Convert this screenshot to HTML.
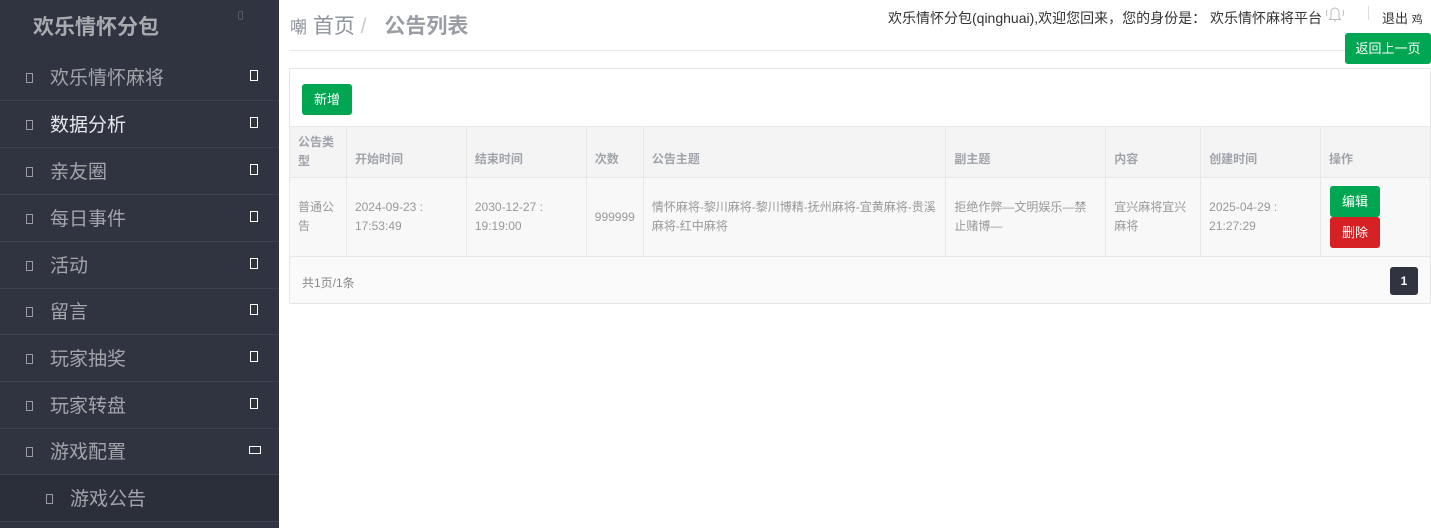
<!DOCTYPE html>
<html><head><meta charset="utf-8"><style>
*{box-sizing:border-box;margin:0;padding:0}
body{width:1431px;height:528px;overflow:hidden;background:#fff;font-family:"Liberation Sans","Noto Sans CJK SC",sans-serif;position:relative}
.side{position:absolute;left:0;top:0;width:279px;height:528px;background:#2f3440}
.logo{position:absolute;left:33px;top:11px;font-size:21px;font-weight:bold;color:#a9aaae}
.logo-ic{position:absolute;left:238px;top:11px;width:5px;height:9px;border:1px solid #555b66;border-radius:2px}
.item{position:absolute;left:0;width:279px;height:47px;border-bottom:1px solid #3d4350;color:#a3a5aa;font-size:19px}
.item .t{position:absolute;left:50px;top:9px}
.item .i{position:absolute;left:26px;top:19px;width:7px;height:10px;border:1px solid #9a9ca2}
.item .r{position:absolute;left:250px;top:16px;width:8px;height:11px;border:1.5px solid #fff}
.item.sub{background:#2b2f3a}
.item.sub .t{left:70px}.item.sub .i{left:46px}
.bc{position:absolute;left:290px;top:10px;font-size:21px;color:#8e949c}
.bc b{font-weight:bold;color:#9a9ea4;margin-left:12px}
.hl{position:absolute;left:289px;top:50px;width:1056px;height:1px;background:#e8e8e8}
.top{position:absolute;left:888px;top:8px;font-size:14px;color:#333}
.out{position:absolute;left:1382px;top:8px;font-size:13px;color:#333}
.vl{position:absolute;left:1368px;top:6px;width:1px;height:14px;background:#ddd}
.btn{position:absolute;color:#fff;font-size:13px;text-align:center;border-radius:3px}
.g{background:#00a651}.rd{background:#d52024}
.panel{position:absolute;left:289px;top:68px;width:1142px;height:236px;border:1px solid #e6e6e6;border-radius:2px}
table{position:absolute;left:289px;top:126px;border-collapse:collapse;font-size:12px;color:#999}
td{border:1px solid #e8e8e8;padding:0 8px;vertical-align:middle;line-height:19px}
thead td{background:#f4f4f4;height:51px;font-weight:bold;color:#a0a4aa;padding-top:14px}
tbody td{background:#f8f8f8;height:79px}
.foot{position:absolute;left:290px;top:257px;width:1140px;height:46px;background:#fafafa}
</style></head><body>
<div class="side">
<div class="logo">欢乐情怀分包</div><div class="logo-ic"></div>
<div class="item" style="top:54px"><span class="i"></span><span class="t">欢乐情怀麻将</span><span class="r"></span></div>
<div class="item" style="top:101px;color:#e6e7ea"><span class="i"></span><span class="t">数据分析</span><span class="r"></span></div>
<div class="item" style="top:148px"><span class="i"></span><span class="t">亲友圈</span><span class="r"></span></div>
<div class="item" style="top:195px"><span class="i"></span><span class="t">每日事件</span><span class="r"></span></div>
<div class="item" style="top:242px"><span class="i"></span><span class="t">活动</span><span class="r"></span></div>
<div class="item" style="top:288px"><span class="i"></span><span class="t">留言</span><span class="r"></span></div>
<div class="item" style="top:335px"><span class="i"></span><span class="t">玩家抽奖</span><span class="r"></span></div>
<div class="item" style="top:382px"><span class="i"></span><span class="t">玩家转盘</span><span class="r"></span></div>
<div class="item" style="top:428px"><span class="i"></span><span class="t">游戏配置</span><span class="r" style="width:12px;height:8px;top:18px;left:249px"></span></div>
<div class="item sub" style="top:475px"><span class="i"></span><span class="t">游戏公告</span></div>
</div>
<div class="bc"><span style="font-size:17px">嘲</span> 首页 <span style="color:#ccc">/</span> <b>公告列表</b></div>
<div class="hl"></div>
<div class="top">欢乐情怀分包(qinghuai),欢迎您回来，您的身份是： 欢乐情怀麻将平台</div>
<svg style="position:absolute;left:1324px;top:4px" width="22" height="20" viewBox="0 0 22 20" fill="none" stroke="#bbb" stroke-width="1"><path d="M7 14V8a4 4 0 0 1 8 0v6l1.5 1.5h-11z M10 17h2 M3 6q-1 3 0 6 M19 6q1 3 0 6"/></svg>
<div class="vl"></div>
<div class="out">退出 <span style="font-size:11px">鸡</span></div>
<div class="btn g" style="left:1345px;top:33px;width:86px;height:31px;line-height:31px">返回上一页</div>
<div class="panel"></div>
<div class="btn g" style="left:302px;top:84px;width:50px;height:31px;line-height:31px">新增</div>
<table>
<thead><tr>
<td style="width:57px;padding-top:0">公告类<br>型</td><td style="width:120px">开始时间</td><td style="width:120px">结束时间</td><td style="width:57px">次数</td><td style="width:303px">公告主题</td><td style="width:160px">副主题</td><td style="width:95px">内容</td><td style="width:120px">创建时间</td><td style="width:110px">操作</td></tr></thead>
<tbody><tr>
<td>普通公<br>告</td><td>2024-09-23 :<br>17:53:49</td><td>2030-12-27 :<br>19:19:00</td><td>999999</td><td>情怀麻将-黎川麻将-黎川博精-抚州麻将-宜黄麻将-贵溪<br>麻将-红中麻将</td><td>拒绝作弊—文明娱乐—禁<br>止赌博—</td><td>宜兴麻将宜兴<br>麻将</td><td>2025-04-29 :<br>21:27:29</td><td></td></tr></tbody>
</table>
<div class="btn g" style="left:1330px;top:186px;width:50px;height:31px;line-height:31px">编辑</div>
<div class="btn rd" style="left:1330px;top:217px;width:50px;height:31px;line-height:31px">删除</div>
<div class="foot"><span style="position:absolute;left:12px;top:17px;font-size:12px;color:#888">共1页/1条</span>
<div class="btn" style="left:1100px;top:10px;width:28px;height:28px;line-height:28px;background:#2f3440;font-size:12px;font-weight:bold">1</div></div>
</body></html>
